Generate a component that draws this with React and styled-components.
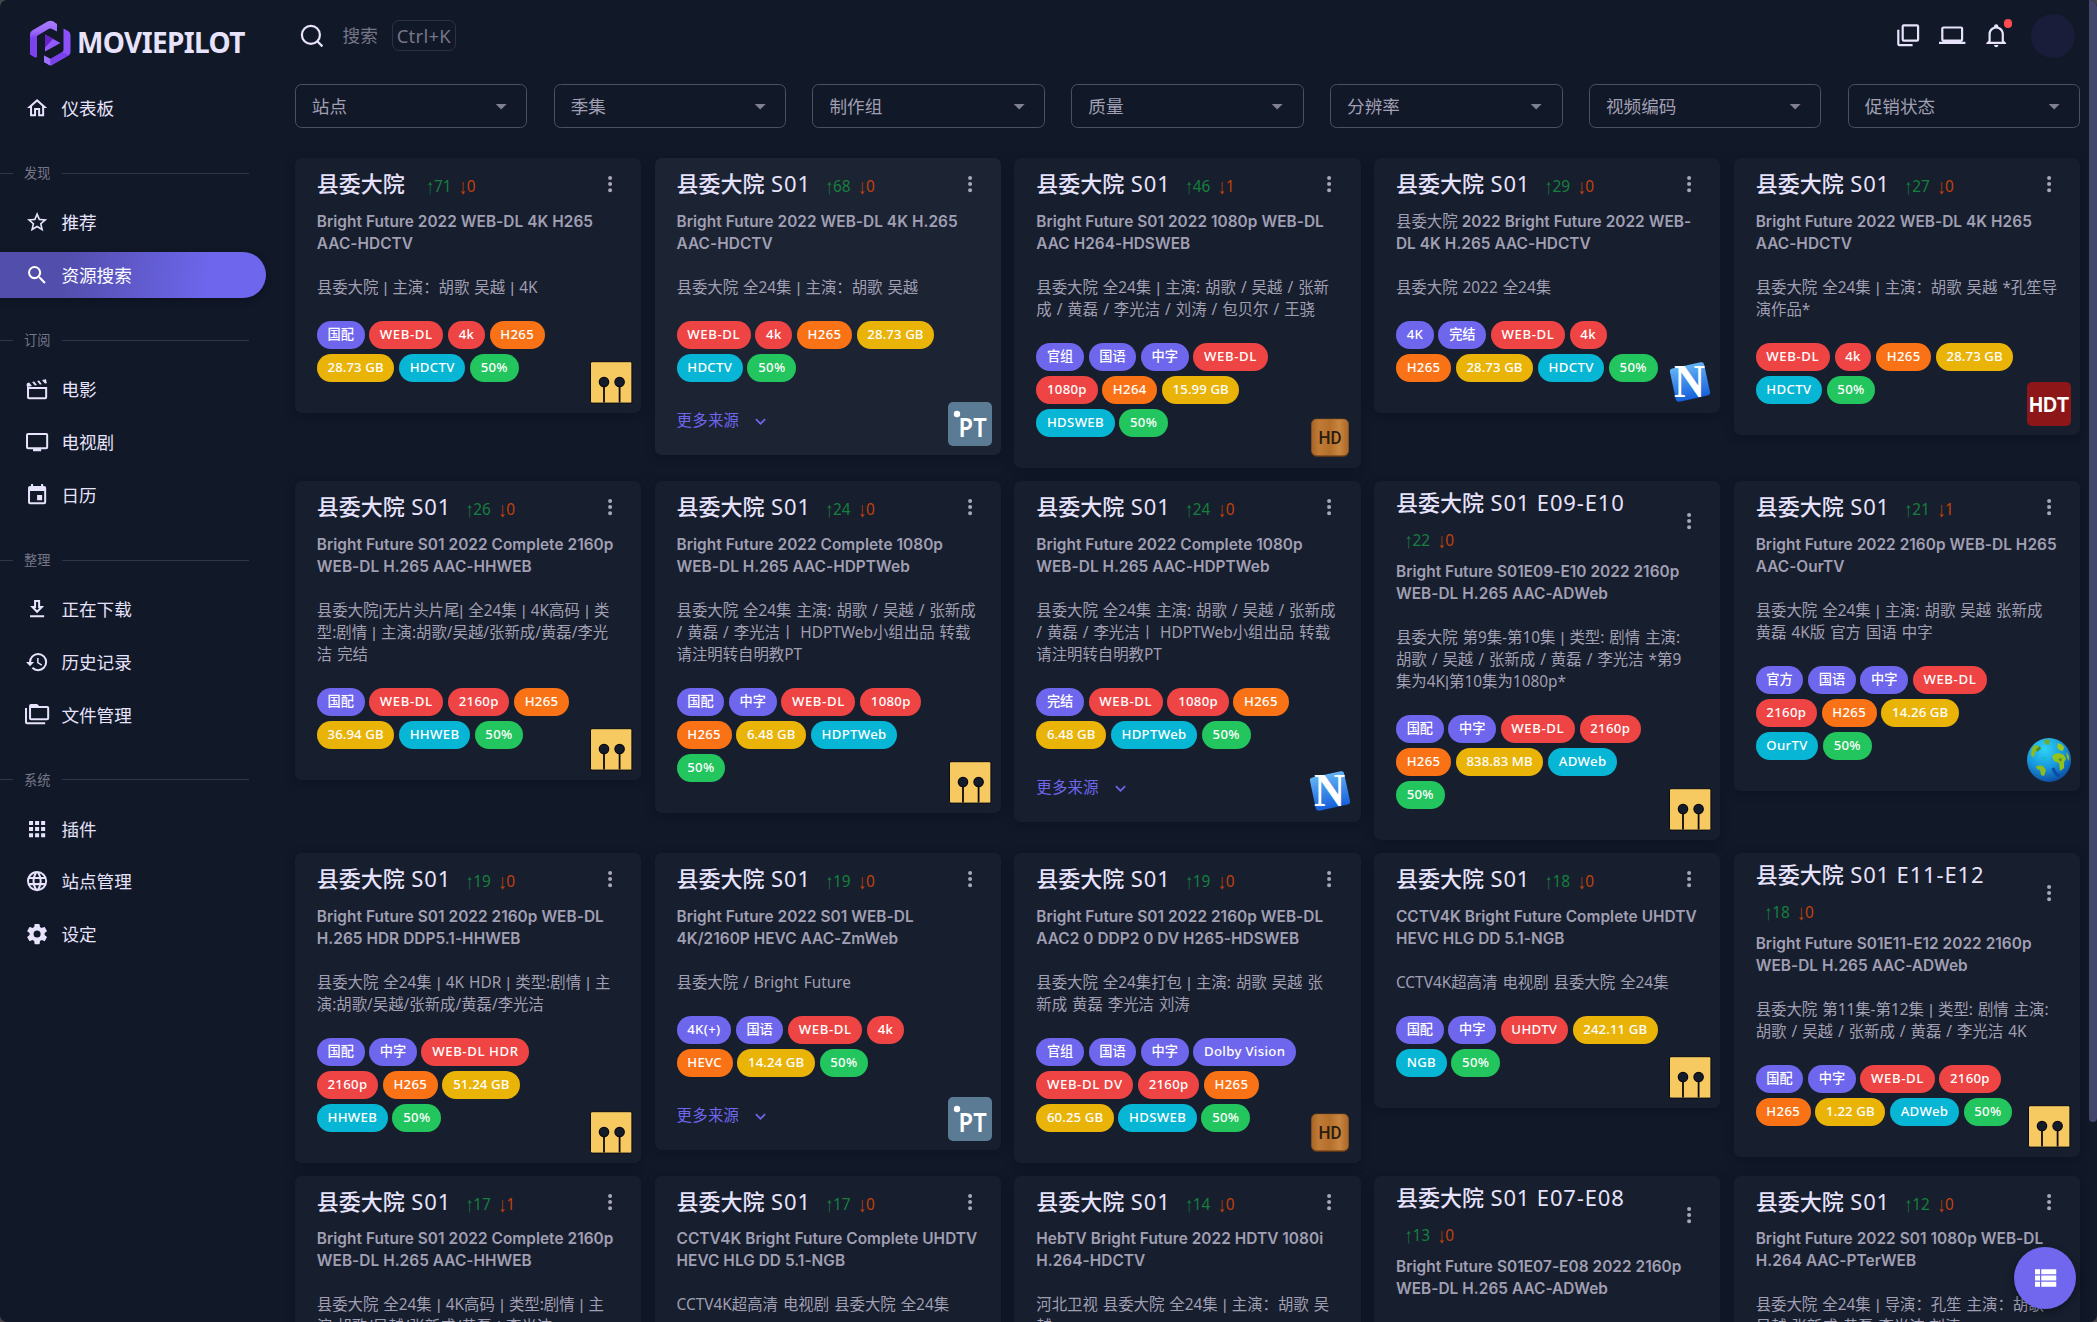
import React from "react";
import styled, { createGlobalStyle } from "styled-components";

const LATIN = '"Noto Sans", "Noto Sans CJK SC", sans-serif';

const GlobalStyle = createGlobalStyle`
  *, *::before, *::after { box-sizing: border-box; }
  html, body { margin: 0; background: #45454b; overflow: hidden; }
  body { font-family: ${LATIN}; color: #e7e3fc; }
  svg { display: block; flex: none; overflow: visible; }
`;

/* ---------- layout ---------- */
const Page = styled.div`
  position: relative;
  display: flex;
  width: 2097px;
  height: 1322px;
  overflow: hidden;
  background: #111827;
  border-radius: 7px;
`;
const Sidebar = styled.aside`
  flex: none;
  width: 286px;
  overflow: hidden;
`;
const Main = styled.main`
  flex: 1;
  min-width: 0;
  padding: 0 8.8px 0 8.8px;
`;
const ScrollTrack = styled.div`
  flex: none;
  width: 8px;
`;
const ScrollThumb = styled.div`
  height: 1122px;
  background: #44456a;
  border-radius: 0 0 4px 4px;
`;

/* ---------- sidebar ---------- */
const Brand = styled.div`
  display: flex;
  align-items: center;
  gap: 6px;
  height: 85px;
  padding-left: 29px;
`;
const BrandName = styled.span`
  font-size: 28px;
  font-weight: 700;
  line-height: 36px;
  letter-spacing: -0.6px;
  margin-top: -2px;
  white-space: nowrap;
`;
const NavItem = styled.a`
  display: flex;
  align-items: center;
  gap: 12px;
  width: 266px;
  height: 46.2px;
  margin-bottom: 6.6px;
  padding-left: 25.2px;
  border-radius: 0 23.1px 23.1px 0;
  font-size: 17.6px;
  line-height: 26px;
  color: ${(p) => (p.$active ? "#fff" : "#e7e3fc")};
  background: ${(p) => (p.$active ? "linear-gradient(98deg, #524eac 24%, #6e66ec 78%)" : "none")};
  box-shadow: ${(p) => (p.$active ? "0 3px 7px rgba(8, 12, 26, 0.45)" : "none")};
`;
const NavHeading = styled.div`
  display: flex;
  align-items: center;
  height: 61.4px;
  padding-top: 10px;
  font-size: 13.2px;
  line-height: 20px;
  color: #757688;
  &::before {
    content: "";
    width: 13px;
    height: 1px;
    margin-right: 11px;
    background: #31374a;
  }
  &::after {
    content: "";
    width: 187px;
    height: 1px;
    margin-left: 11.6px;
    background: #31374a;
  }
`;

/* ---------- top bar ---------- */
const TopBar = styled.header`
  display: flex;
  align-items: center;
  height: 71px;
`;
const SearchIconWrap = styled.span`
  display: flex;
  margin-left: 5.4px;
`;
const SearchLabel = styled.span`
  margin: -1px 0 0 18.4px;
  font-size: 17.6px;
  line-height: 26px;
  color: #757688;
`;
const Shortcut = styled.kbd`
  margin-left: 14px;
  width: 64px;
  height: 31px;
  border: 1px solid #2c3244;
  border-radius: 7px;
  font: 18.4px/29px ${LATIN};
  letter-spacing: 0.3px;
  text-align: center;
  color: #757688;
`;
const Actions = styled.div`
  display: flex;
  align-items: center;
  margin-left: auto;
  padding-right: 5px;
`;
const Action = styled.span`
  position: relative;
  display: flex;
  width: 26.4px;
  height: 26.4px;
  margin-right: 17.6px;
`;
const Dot = styled.i`
  position: absolute;
  top: -3px;
  right: -3.2px;
  width: 8.8px;
  height: 8.8px;
  border-radius: 50%;
  background: #ff4c51;
`;
const Avatar = styled.span`
  width: 44px;
  height: 44px;
  margin-left: 4.4px;
  border-radius: 50%;
  background: #1a1d3a;
`;

/* ---------- filters ---------- */
const Filters = styled.div`
  display: grid;
  grid-template-columns: repeat(7, 1fr);
  gap: 26.4px;
  margin-top: 13.2px;
`;
const Select = styled.div`
  display: flex;
  align-items: center;
  justify-content: space-between;
  height: 44px;
  padding: 0 12px 0 16px;
  border: 1px solid #4b5062;
  border-radius: 6.6px;
  font-size: 17.6px;
  line-height: 26px;
  color: #a09fb3;
`;

/* ---------- cards ---------- */
const Grid = styled.section`
  display: grid;
  grid-template-columns: repeat(5, 1fr);
  align-items: start;
  gap: 12.6px 13.2px;
  margin-top: 29.9px;
`;
const Card = styled.article`
  position: relative;
  padding: 0 0 30.8px 22px;
  border-radius: 6.6px;
  background: ${(p) => (p.$hover ? "#1c2333" : "#171e2d")};
  box-shadow: 0 2px 10px rgba(8, 12, 26, 0.35);
`;
const CardHead = styled.div`
  display: flex;
  align-items: center;
  min-height: 52.8px;
  padding: 4.4px 19.3px 4.4px 0;
`;
const Title = styled.h3`
  flex: 1;
  margin: 0;
  font-size: 22px;
  font-weight: 500;
  line-height: 35.2px;
`;
const Season = styled.span`
  margin-left: 0.8px;
  font-weight: 400;
  letter-spacing: 0.85px;
`;
const Peers = styled.span`
  display: inline-block;
  margin-left: ${(p) => (p.$wide ? "15.5px" : "8.6px")};
  font-size: 15.4px;
  font-weight: 400;
  line-height: 30px;
  letter-spacing: -0.1px;
  white-space: nowrap;
`;
const Arrow = styled.span`
  display: inline-block;
  font-family: "Liberation Sans", sans-serif;
  font-size: 16px;
  line-height: 20px;
  transform: scaleY(1.3);
`;
const Up = styled.span`
  margin-right: 7.5px;
  color: #15803d;
`;
const Down = styled.span`
  color: #c2410c;
`;
const Release = styled.p`
  margin: 0 0 22px;
  font-family: Inter, "Noto Sans CJK SC", sans-serif;
  font-size: 15.4px;
  font-weight: 600;
  line-height: 22px;
  letter-spacing: 0.045px;
  white-space: pre;
  color: #a09fb3;
`;
const Han = styled.span`
  font-weight: 400;
`;
const Description = styled.p`
  margin: 0 0 22px;
  font-size: 15.4px;
  line-height: 22px;
  word-spacing: 1px;
  white-space: pre;
  color: #a09fb3;
`;
const Pipe = styled.span`
  font-family: "Liberation Sans", sans-serif;
`;
const Chips = styled.div`
  display: flex;
  flex-direction: column;
  gap: 4.4px;
`;
const ChipRow = styled.div`
  display: flex;
  gap: 4.6px;
`;
const Chip = styled.span`
  height: 28.6px;
  padding: 0 10.7px;
  border-radius: 14.3px;
  background: ${(p) => p.$color};
  font-size: 13.2px;
  font-weight: 500;
  line-height: 26.4px;
  letter-spacing: ${(p) => p.$track};
  white-space: nowrap;
  color: #fff;
`;
const More = styled.button`
  display: flex;
  align-items: center;
  gap: 11px;
  height: 22px;
  margin: 28px 0 -8.2px;
  padding: 0;
  border: 0;
  background: none;
  font: 15.4px/22px ${LATIN};
  letter-spacing: 0.3px;
  color: #6e66ec;
`;
const SiteBadge = styled.div`
  position: absolute;
  right: 8.8px;
  bottom: 8.8px;
`;
const Fab = styled.button`
  position: absolute;
  right: 21px;
  bottom: 13px;
  display: flex;
  align-items: center;
  justify-content: center;
  width: 62px;
  height: 62px;
  padding: 0;
  border: 0;
  border-radius: 50%;
  background: #7067ee;
  color: #fff;
  box-shadow: 0 3px 8px rgba(0, 0, 0, 0.35);
`;

/* ---------- icons ---------- */
const PATHS = {
  home: "M12 5.69l5 4.5V18h-2v-6H9v6H7v-7.81l5-4.5M12 3L2 12h3v8h6v-6h2v6h6v-8h3L12 3z",
  star: "M12 15.39l-3.76 2.27.99-4.28-3.32-2.88 4.38-.37L12 6.09l1.71 4.04 4.38.37-3.32 2.88.99 4.28M22 9.24l-7.19-.61L12 2 9.19 8.63 2 9.24l5.45 4.73L5.82 21 12 17.27 18.18 21l-1.64-7.03L22 9.24z",
  magnify: "M9.5 3A6.5 6.5 0 0 1 16 9.5c0 1.61-.59 3.09-1.56 4.23l.27.27h.79l5 5-1.5 1.5-5-5v-.79l-.27-.27A6.516 6.516 0 0 1 9.5 16 6.5 6.5 0 0 1 3 9.5 6.5 6.5 0 0 1 9.5 3m0 2C7 5 5 7 5 9.5S7 14 9.5 14 14 12 14 9.5 12 5 9.5 5z",
  movie: "m20.84 2.18-3.93.78 2.74 3.54 1.97-.4-.78-3.92m-6.87 1.36L12 3.93l2.75 3.53 1.96-.39-2.74-3.53m-4.9.96-1.97.41 2.75 3.53 1.96-.39L9.07 4.5m-4.91 1-.98.19a2.008 2.008 0 0 0-1.57 2.35L2 10l4.9-.97-2.74-3.53M4 12v8h16v-8H4M2 10h20v10a2 2 0 0 1-2 2H4a2 2 0 0 1-2-2V10z",
  tv: "M21 17H3V5h18m0-2H3a2 2 0 0 0-2 2v12a2 2 0 0 0 2 2h5v2h8v-2h5a2 2 0 0 0 2-2V5a2 2 0 0 0-2-2z",
  calendar: "M19 19H5V8h14m-3-7v2H8V1H6v2H5c-1.11 0-2 .89-2 2v14a2 2 0 0 0 2 2h14a2 2 0 0 0 2-2V5a2 2 0 0 0-2-2h-1V1m-1 11h-5v5h5v-5z",
  download: "M13 5v6h1.17L12 13.17 9.83 11H11V5h2m2-2H9v6H5l7 7 7-7h-4V3m4 15H5v2h14v-2z",
  history: "M13.5 8H12v5l4.28 2.54.72-1.21-3.5-2.08V8M13 3a9 9 0 0 0-9 9H1l3.96 4.03L9 12H6a7 7 0 0 1 7-7 7 7 0 0 1 7 7 7 7 0 0 1-7 7c-1.93 0-3.68-.79-4.94-2.06l-1.42 1.42A8.896 8.896 0 0 0 13 21a9 9 0 0 0 9-9 9 9 0 0 0-9-9",
  folders: "M22 4a2 2 0 0 1 2 2v10a2 2 0 0 1-2 2H6a2 2 0 0 1-2-2V4a2 2 0 0 1 2-2h6l2 2h8M2 6v14h18v2H2a2 2 0 0 1-2-2V6h2m4 0v10h16V6H6z",
  apps: "M16 20h4v-4h-4m0-2h4v-4h-4m-6-2h4V4h-4m6 4h4V4h-4m-6 10h4v-4h-4m-6 4h4v-4H4m0 10h4v-4H4m6 4h4v-4h-4m-6-8h4V4H4v4z",
  web: "M16.36 14c.08-.66.14-1.32.14-2 0-.68-.06-1.34-.14-2h3.38c.16.64.26 1.31.26 2s-.1 1.36-.26 2m-5.15 5.56c.6-1.11 1.06-2.31 1.38-3.56h2.95a8.03 8.03 0 0 1-4.33 3.56M14.34 14H9.66c-.1-.66-.16-1.32-.16-2 0-.68.06-1.35.16-2h4.68c.09.65.16 1.32.16 2 0 .68-.07 1.34-.16 2M12 19.96c-.83-1.2-1.5-2.53-1.91-3.96h3.82c-.41 1.43-1.08 2.76-1.91 3.96M8 8H5.08A7.923 7.923 0 0 1 9.4 4.44C8.8 5.55 8.35 6.75 8 8m-2.92 8H8c.35 1.25.8 2.45 1.4 3.56A8.008 8.008 0 0 1 5.08 16m-.82-2C4.1 13.36 4 12.69 4 12s.1-1.36.26-2h3.38c-.08.66-.14 1.32-.14 2 0 .68.06 1.34.14 2M12 4.03c.83 1.2 1.5 2.54 1.91 3.97h-3.82c.41-1.43 1.08-2.77 1.91-3.97M18.92 8h-2.95a15.65 15.65 0 0 0-1.38-3.56c1.84.63 3.37 1.9 4.33 3.56M12 2C6.47 2 2 6.5 2 12a10 10 0 0 0 10 10 10 10 0 0 0 10-10A10 10 0 0 0 12 2z",
  cog: "M12 15.5A3.5 3.5 0 0 1 8.5 12 3.5 3.5 0 0 1 12 8.5a3.5 3.5 0 0 1 3.5 3.5 3.5 3.5 0 0 1-3.5 3.5m7.43-2.53c.04-.32.07-.64.07-.97 0-.33-.03-.66-.07-1l2.11-1.63c.19-.15.24-.42.12-.64l-2-3.46c-.12-.22-.39-.31-.61-.22l-2.49 1c-.52-.39-1.06-.73-1.69-.98l-.37-2.65A.506.506 0 0 0 14 2h-4c-.25 0-.46.18-.5.42l-.37 2.65c-.63.25-1.17.59-1.69.98l-2.49-1c-.22-.09-.49 0-.61.22l-2 3.46c-.13.22-.07.49.12.64L4.57 11c-.04.34-.07.67-.07 1 0 .33.03.65.07.97l-2.11 1.66c-.19.15-.25.42-.12.64l2 3.46c.12.22.39.3.61.22l2.49-1.01c.52.4 1.06.74 1.69.99l.37 2.65c.04.24.25.42.5.42h4c.25 0 .46-.18.5-.42l.37-2.65c.63-.26 1.17-.59 1.69-.99l2.49 1.01c.22.08.49 0 .61-.22l2-3.46c.12-.22.07-.49-.12-.64l-2.11-1.66z",
  dots: "M12 16a2 2 0 0 1 2 2 2 2 0 0 1-2 2 2 2 0 0 1-2-2 2 2 0 0 1 2-2m0-6a2 2 0 0 1 2 2 2 2 0 0 1-2 2 2 2 0 0 1-2-2 2 2 0 0 1 2-2m0-6a2 2 0 0 1 2 2 2 2 0 0 1-2 2 2 2 0 0 1-2-2 2 2 0 0 1 2-2z",
  caret: "M7 10l5 5 5-5H7z",
  chevron: "M7.41 8.58L12 13.17l4.59-4.59L18 10l-6 6-6-6 1.41-1.42z",
  list: "M9 5v4h12V5M9 19h12v-4H9m0-1h12v-4H9M4 9h4V5H4m0 14h4v-4H4m0-1h4v-4H4v4z",
  copies: "M20 16V4H8v12h12m2 0a2 2 0 0 1-2 2H8a2 2 0 0 1-2-2V4a2 2 0 0 1 2-2h12a2 2 0 0 1 2 2v12m-6 4v2H4a2 2 0 0 1-2-2V7h2v13h12z",
  laptop: "M4 6h16v10H4m16 2a2 2 0 0 0 2-2V6a2 2 0 0 0-2-2H4c-1.11 0-2 .89-2 2v10a2 2 0 0 0 2 2H0v2h24v-2h-4z",
  bell: "M10 21h4c0 1.1-.9 2-2 2s-2-.9-2-2m11-2v1H3v-1l2-2v-6c0-3.1 2.03-5.83 5-6.71V4a2 2 0 0 1 2-2 2 2 0 0 1 2 2v.29c2.97.88 5 3.61 5 6.71v6l2 2m-4-8a5 5 0 0 0-5-5 5 5 0 0 0-5 5v7h10v-7z",
};
const Icon = ({ name, size = 24.2, color = "currentColor" }) => (
  <svg width={size} height={size} viewBox="0 0 24 24" fill={color}>
    <path d={PATHS[name]} />
  </svg>
);

const SearchIcon = () => (
  <svg width="24" height="24" viewBox="0 0 24 24" fill="none" stroke="#e7e3fc" strokeWidth="2.2">
    <circle cx="10.9" cy="10.9" r="9" />
    <path d="M17.3 17.3L22.4 22.4" />
  </svg>
);

const Logo = () => (
  <svg width="42" height="46" viewBox="0 0 42 46">
    <defs>
      <linearGradient id="lgA" x1="0" y1="0" x2="0" y2="1">
        <stop offset="0" stopColor="#a97bff" />
        <stop offset="0.6" stopColor="#9a68fb" />
        <stop offset="1" stopColor="#7a3ff0" />
      </linearGradient>
    </defs>
    <path d="M1 15v19.500L5.500 37.200Q8 38 8 36.500V16z" fill="#7c42ee" />
    <path d="M1 19v-4.500Q1 11.500 3.500 10.300L19 1.300Q21.400 .300 24 1.300L28 4v7.500L22.500 8.700Q21.400 8.200 20 8.800L9.500 15Q7 17 1 19z" fill="url(#lgA)" />
    <path d="M34.500 8.500l4.600 2.600Q41.500 12.500 41.500 15v17Q41.500 34.300 39.500 35.500L23 45Q21.400 46 19.500 44.800L15 42v-6.500l6.500 3.500L33 32.300Q34.500 31.300 34.500 29.500z" fill="#8b51fb" />
    <path d="M15 35.500l6.500 3.500v6.500L15 42z" fill="#a070ff" />
    <path d="M21.500 39L33 32.300l7 2.700-18.500 10.500z" fill="#7a40ee" />
    <path d="M16 14.500v17L31.500 23z" fill="#9459fd" />
    <path d="M16 14.500v13l8-8.500z" fill="#6820c9" />
  </svg>
);

const BADGES = {
  pter: (
    <>
      <rect x="1.500" y="1.700" width="41.400" height="41.400" rx="1.500" fill="#f7ca61" stroke="#0a0d14" strokeWidth="1" />
      <path d="M15 22v20.600M30.600 22v20.600" stroke="#0a0a0c" strokeWidth="1.800" />
      <circle cx="15" cy="22" r="4.700" fill="#141b2b" stroke="#0a0a0c" strokeWidth="1.200" />
      <circle cx="30.600" cy="22" r="4.700" fill="#141b2b" stroke="#0a0a0c" strokeWidth="1.200" />
    </>
  ),
  pt: (
    <>
      <rect width="44" height="44" rx="5" fill="#5b7b95" />
      <circle cx="9" cy="12" r="3.200" fill="#fff" />
      <text x="24.600" y="34.500" textAnchor="middle" textLength="28" lengthAdjust="spacingAndGlyphs" fontFamily="Noto Sans" fontWeight="600" fontSize="26.500" fill="#fff">PT</text>
    </>
  ),
  hd: (
    <>
      <defs>
        <linearGradient id="wood" x1="0" x2="1">
          <stop offset="0" stopColor="#a86424" />
          <stop offset="0.2" stopColor="#c07c36" />
          <stop offset="0.5" stopColor="#b46f2b" />
          <stop offset="0.75" stopColor="#c98640" />
          <stop offset="1" stopColor="#a9682a" />
        </linearGradient>
      </defs>
      <rect x="3.500" y="4.500" width="37" height="37.500" rx="5" fill="#5a3517" />
      <rect x="3.500" y="4" width="37" height="36.500" rx="5" fill="url(#wood)" stroke="#8c5520" strokeWidth="0.600" />
      <text x="22" y="29" textAnchor="middle" textLength="23" lengthAdjust="spacingAndGlyphs" fontFamily="Roboto" fontWeight="500" fontSize="19" fill="#2b1c10">HD</text>
    </>
  ),
  nico: (
    <>
      <defs>
        <linearGradient id="blu" x1="0" y1="0" x2="0" y2="1">
          <stop offset="0" stopColor="#62b2f6" />
          <stop offset="1" stopColor="#1560da" />
        </linearGradient>
      </defs>
      <g transform="rotate(-12 22 22)">
        <rect x="4.500" y="5" width="35" height="34" rx="3" fill="url(#blu)" />
      </g>
      <text x="21.500" y="37" textAnchor="middle" textLength="31" lengthAdjust="spacingAndGlyphs" fontFamily="Liberation Serif" fontWeight="700" fontSize="47" fill="#fff">N</text>
    </>
  ),
  hdt: (
    <>
      <rect width="44" height="44" rx="5" fill="#8d1718" />
      <text x="22" y="30" textAnchor="middle" textLength="40" lengthAdjust="spacingAndGlyphs" fontFamily="Liberation Sans" fontWeight="700" fontSize="22" fill="#fff">HDT</text>
    </>
  ),
  earth: (
    <>
      <defs>
        <radialGradient id="sea" cx="0.4" cy="0.25" r="0.85">
          <stop offset="0" stopColor="#2fd4f5" />
          <stop offset="0.5" stopColor="#1898dd" />
          <stop offset="1" stopColor="#0a3c96" />
        </radialGradient>
      </defs>
      <circle cx="22" cy="22" r="22" fill="url(#sea)" />
      <path d="M4 17Q4 10 8 7q4 0 4 3l-4 4q0 5-3 5z" fill="#8dbb20" />
      <path d="M17 2q4-1 6 0l-1 5-4-1z" fill="#6fae2c" />
      <path d="M31 5q4 1 6 4l-1 4-4-1-2-3z" fill="#9cc820" />
      <path d="M25 18q3-3 7-3l5 2 2 4-2 3v6l-4 3-1-8-5-2z" fill="#94c11c" />
      <path d="M9 28q4-1 7 0l3 4-2 6-3-1-1-5-3-1z" fill="#8dbb20" />
      <path d="M39 14q4 3 3 9l-2-3z" fill="#86b82a" />
      <path d="M9 11l4-3 1 3-4 3zM31 21l4-1-1 4z" fill="#4f8f2a" />
      <path d="M14 20q4-3 7 1-3 4-7-1z" fill="#18b8d8" />
      <path d="M26 30q2 7 7 8" stroke="#0c4ba6" strokeWidth="3" fill="none" />
    </>
  ),
};
const SiteIcon = ({ name }) => (
  <SiteBadge>
    <svg width="44" height="44" viewBox="0 0 44 44">{BADGES[name]}</svg>
  </SiteBadge>
);

/* ---------- data ---------- */
const NAV = [
  { icon: "home", label: "仪表板" },
  { heading: "发现" },
  { icon: "star", label: "推荐" },
  { icon: "magnify", label: "资源搜索", active: true },
  { heading: "订阅" },
  { icon: "movie", label: "电影" },
  { icon: "tv", label: "电视剧" },
  { icon: "calendar", label: "日历" },
  { heading: "整理" },
  { icon: "download", label: "正在下载" },
  { icon: "history", label: "历史记录" },
  { icon: "folders", label: "文件管理" },
  { heading: "系统" },
  { icon: "apps", label: "插件" },
  { icon: "web", label: "站点管理" },
  { icon: "cog", label: "设定" },
];
const FILTERS = ["站点", "季集", "制作组", "质量", "分辨率", "视频编码", "促销状态"];

const P = "#6e66ec", R = "#ef4444", O = "#f97316", Y = "#eab308", C = "#06b6d4", G = "#22c55e";
const colorOf = (t) => {
  if (/^(WEB-DL|UHDTV|4k$|\d+p$)/.test(t)) return R;
  if (/^(H26\d|HEVC)$/.test(t)) return O;
  if (/ (GB|MB)$/.test(t)) return Y;
  if (/^(HDCTV|HDSWEB|HHWEB|HDPTWeb|ADWeb|OurTV|NGB)$/.test(t)) return C;
  if (/%$/.test(t)) return G;
  return P;
};
const trackOf = (t) => {
  if (/[\u4e00-\u9fff]/.test(t)) return "0";
  if (/^WEB-DL/.test(t)) return "0.6px";
  return / (GB|MB)$/.test(t) ? "0.1px" : "0.32px";
};

const card = (season, up, down, release, desc, chips, site, extra = {}) => ({ season, up, down, release, desc, chips, site, ...extra });
const CARDS = [
  card("", 71, 0, "Bright Future 2022 WEB-DL 4K H265\nAAC-HDCTV", "县委大院 | 主演：胡歌 吴越 | 4K", "国配,WEB-DL,4k,H265/28.73 GB,HDCTV,50%", "pter"),
  card("S01", 68, 0, "Bright Future 2022 WEB-DL 4K H.265\nAAC-HDCTV", "县委大院 全24集 | 主演：胡歌 吴越", "WEB-DL,4k,H265,28.73 GB/HDCTV,50%", "pt", { more: true, hover: true }),
  card("S01", 46, 1, "Bright Future S01 2022 1080p WEB-DL\nAAC H264-HDSWEB", "县委大院 全24集 | 主演: 胡歌 / 吴越 / 张新\n成 / 黄磊 / 李光洁 / 刘涛 / 包贝尔 / 王骁", "官组,国语,中字,WEB-DL/1080p,H264,15.99 GB/HDSWEB,50%", "hd"),
  card("S01", 29, 0, "县委大院 2022 Bright Future 2022 WEB-\nDL 4K H.265 AAC-HDCTV", "县委大院 2022 全24集", "4K,完结,WEB-DL,4k/H265,28.73 GB,HDCTV,50%", "nico"),
  card("S01", 27, 0, "Bright Future 2022 WEB-DL 4K H265\nAAC-HDCTV", "县委大院 全24集 | 主演：胡歌 吴越 *孔笙导\n演作品*", "WEB-DL,4k,H265,28.73 GB/HDCTV,50%", "hdt"),

  card("S01", 26, 0, "Bright Future S01 2022 Complete 2160p\nWEB-DL H.265 AAC-HHWEB", "县委大院|无片头片尾| 全24集 | 4K高码 | 类\n型:剧情 | 主演:胡歌/吴越/张新成/黄磊/李光\n洁 完结", "国配,WEB-DL,2160p,H265/36.94 GB,HHWEB,50%", "pter"),
  card("S01", 24, 0, "Bright Future 2022 Complete 1080p\nWEB-DL H.265 AAC-HDPTWeb", "县委大院 全24集 主演: 胡歌 / 吴越 / 张新成\n/ 黄磊 / 李光洁丨 HDPTWeb小组出品 转载\n请注明转自明教PT", "国配,中字,WEB-DL,1080p/H265,6.48 GB,HDPTWeb/50%", "pter"),
  card("S01", 24, 0, "Bright Future 2022 Complete 1080p\nWEB-DL H.265 AAC-HDPTWeb", "县委大院 全24集 主演: 胡歌 / 吴越 / 张新成\n/ 黄磊 / 李光洁丨 HDPTWeb小组出品 转载\n请注明转自明教PT", "完结,WEB-DL,1080p,H265/6.48 GB,HDPTWeb,50%", "nico", { more: true }),
  card("S01 E09-E10", 22, 0, "Bright Future S01E09-E10 2022 2160p\nWEB-DL H.265 AAC-ADWeb", "县委大院 第9集-第10集 | 类型: 剧情 主演:\n胡歌 / 吴越 / 张新成 / 黄磊 / 李光洁 *第9\n集为4K|第10集为1080p*", "国配,中字,WEB-DL,2160p/H265,838.83 MB,ADWeb/50%", "pter"),
  card("S01", 21, 1, "Bright Future 2022 2160p WEB-DL H265\nAAC-OurTV", "县委大院 全24集 | 主演: 胡歌 吴越 张新成\n黄磊 4K版 官方 国语 中字", "官方,国语,中字,WEB-DL/2160p,H265,14.26 GB/OurTV,50%", "earth"),

  card("S01", 19, 0, "Bright Future S01 2022 2160p WEB-DL\nH.265 HDR DDP5.1-HHWEB", "县委大院 全24集 | 4K HDR | 类型:剧情 | 主\n演:胡歌/吴越/张新成/黄磊/李光洁", "国配,中字,WEB-DL HDR/2160p,H265,51.24 GB/HHWEB,50%", "pter"),
  card("S01", 19, 0, "Bright Future 2022 S01 WEB-DL\n4K/2160P HEVC AAC-ZmWeb", "县委大院 / Bright Future", "4K(+),国语,WEB-DL,4k/HEVC,14.24 GB,50%", "pt", { more: true }),
  card("S01", 19, 0, "Bright Future S01 2022 2160p WEB-DL\nAAC2 0 DDP2 0 DV H265-HDSWEB", "县委大院 全24集打包 | 主演: 胡歌 吴越 张\n新成 黄磊 李光洁 刘涛", "官组,国语,中字,Dolby Vision/WEB-DL DV,2160p,H265/60.25 GB,HDSWEB,50%", "hd"),
  card("S01", 18, 0, "CCTV4K Bright Future Complete UHDTV\nHEVC HLG DD 5.1-NGB", "CCTV4K超高清 电视剧 县委大院 全24集", "国配,中字,UHDTV,242.11 GB/NGB,50%", "pter"),
  card("S01 E11-E12", 18, 0, "Bright Future S01E11-E12 2022 2160p\nWEB-DL H.265 AAC-ADWeb", "县委大院 第11集-第12集 | 类型: 剧情 主演:\n胡歌 / 吴越 / 张新成 / 黄磊 / 李光洁 4K", "国配,中字,WEB-DL,2160p/H265,1.22 GB,ADWeb,50%", "pter"),

  card("S01", 17, 1, "Bright Future S01 2022 Complete 2160p\nWEB-DL H.265 AAC-HHWEB", "县委大院 全24集 | 4K高码 | 类型:剧情 | 主\n演:胡歌/吴越/张新成/黄磊 | 李光洁", "国配,WEB-DL", "pter"),
  card("S01", 17, 0, "CCTV4K Bright Future Complete UHDTV\nHEVC HLG DD 5.1-NGB", "CCTV4K超高清 电视剧 县委大院 全24集", "国配,中字", "pter"),
  card("S01", 14, 0, "HebTV Bright Future 2022 HDTV 1080i\nH.264-HDCTV", "河北卫视 县委大院 全24集 | 主演：胡歌 吴\n越", "国配,中字", "pter"),
  card("S01 E07-E08", 13, 0, "Bright Future S01E07-E08 2022 2160p\nWEB-DL H.265 AAC-ADWeb", "县委大院 第7集-第8集", "国配,中字", "pter"),
  card("S01", 12, 0, "Bright Future 2022 S01 1080p WEB-DL\nH.264 AAC-PTerWEB", "县委大院 全24集 | 导演：孔笙 主演：胡歌\n吴越 张新成 黄磊 李光洁 刘涛", "国配,中字", "pter"),
];

const ResourceCard = ({ item }) => (
  <Card $hover={item.hover}>
    <CardHead>
      <Title>
        县委大院 {item.season && <Season>{item.season}</Season>}{" "}
        <Peers $wide={!item.season}>
          <Up><Arrow>↑</Arrow>{item.up}</Up>
          <Down><Arrow>↓</Arrow>{item.down}</Down>
        </Peers>
      </Title>
      <Icon name="dots" color="#a9a8bb" />
    </CardHead>
    <Release>
      {item.release.split(/([\u4e00-\u9fff]+)/).map((part, i) =>
        i % 2 ? <Han key={i}>{part}</Han> : part
      )}
    </Release>
    <Description>
      {item.desc.split("|").map((part, i) => (
        <React.Fragment key={i}>
          {i > 0 && <Pipe>|</Pipe>}
          {part}
        </React.Fragment>
      ))}
    </Description>
    <Chips>
      {item.chips.split("/").map((row) => (
        <ChipRow key={row}>
          {row.split(",").map((t) => (
            <Chip key={t} $color={colorOf(t)} $track={trackOf(t)}>{t}</Chip>
          ))}
        </ChipRow>
      ))}
    </Chips>
    {item.more && (
      <More>
        更多来源
        <Icon name="chevron" size={21} />
      </More>
    )}
    <SiteIcon name={item.site} />
  </Card>
);

export default function App() {
  return (
    <>
      <GlobalStyle />
      <Page>
        <Sidebar>
          <Brand>
            <Logo />
            <BrandName>MOVIEPILOT</BrandName>
          </Brand>
          <nav>
            {NAV.map((n) =>
              n.heading ? (
                <NavHeading key={n.heading}>{n.heading}</NavHeading>
              ) : (
                <NavItem key={n.label} $active={n.active}>
                  <Icon name={n.icon} />
                  {n.label}
                </NavItem>
              )
            )}
          </nav>
        </Sidebar>
        <Main>
          <TopBar>
            <SearchIconWrap>
              <SearchIcon />
            </SearchIconWrap>
            <SearchLabel>搜索</SearchLabel>
            <Shortcut>Ctrl+K</Shortcut>
            <Actions>
              <Action><Icon name="copies" size={26.4} /></Action>
              <Action><Icon name="laptop" size={26.4} /></Action>
              <Action><Icon name="bell" size={26.4} /><Dot /></Action>
              <Avatar />
            </Actions>
          </TopBar>
          <Filters>
            {FILTERS.map((f) => (
              <Select key={f}>
                {f}
                <Icon name="caret" size={26.4} color="#7f8092" />
              </Select>
            ))}
          </Filters>
          <Grid>
            {CARDS.map((c, i) => (
              <ResourceCard key={i} item={c} />
            ))}
          </Grid>
        </Main>
        <ScrollTrack>
          <ScrollThumb />
        </ScrollTrack>
        <Fab>
          <Icon name="list" size={30} />
        </Fab>
      </Page>
    </>
  );
}
